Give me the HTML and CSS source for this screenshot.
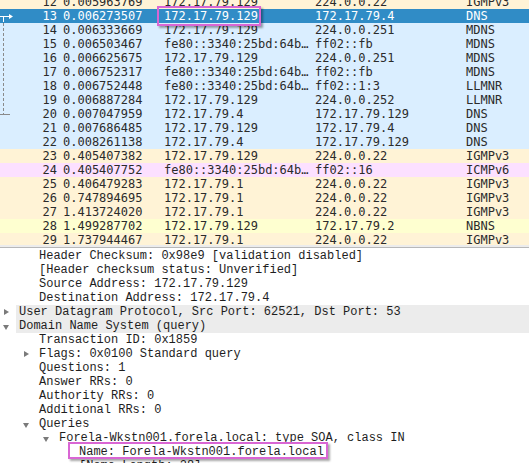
FILE: index.html
```html
<!DOCTYPE html>
<html>
<head>
<meta charset="utf-8">
<link rel="stylesheet" href="styles.css">
</head>
<body>
<div class="app">
  <div class="plist">
    <div class="rows">
      <div class="prow igmp"><span>12</span><span>0.005963769</span><span>172.17.79.129</span><span>224.0.0.22</span><span>IGMPv3</span></div>
      <div class="prow sel"><span>13</span><span>0.006273507</span><span>172.17.79.129</span><span>172.17.79.4</span><span>DNS</span></div>
      <div class="prow udp"><span>14</span><span>0.006333669</span><span>172.17.79.129</span><span>224.0.0.251</span><span>MDNS</span></div>
      <div class="prow udp"><span>15</span><span>0.006503467</span><span>fe80::3340:25bd:64b…</span><span>ff02::fb</span><span>MDNS</span></div>
      <div class="prow udp"><span>16</span><span>0.006625675</span><span>172.17.79.129</span><span>224.0.0.251</span><span>MDNS</span></div>
      <div class="prow udp"><span>17</span><span>0.006752317</span><span>fe80::3340:25bd:64b…</span><span>ff02::fb</span><span>MDNS</span></div>
      <div class="prow udp"><span>18</span><span>0.006752448</span><span>fe80::3340:25bd:64b…</span><span>ff02::1:3</span><span>LLMNR</span></div>
      <div class="prow udp"><span>19</span><span>0.006887284</span><span>172.17.79.129</span><span>224.0.0.252</span><span>LLMNR</span></div>
      <div class="prow udp"><span>20</span><span>0.007047959</span><span>172.17.79.4</span><span>172.17.79.129</span><span>DNS</span></div>
      <div class="prow udp"><span>21</span><span>0.007686485</span><span>172.17.79.129</span><span>172.17.79.4</span><span>DNS</span></div>
      <div class="prow udp"><span>22</span><span>0.008261138</span><span>172.17.79.4</span><span>172.17.79.129</span><span>DNS</span></div>
      <div class="prow igmp"><span>23</span><span>0.405407382</span><span>172.17.79.129</span><span>224.0.0.22</span><span>IGMPv3</span></div>
      <div class="prow icmp"><span>24</span><span>0.405407752</span><span>fe80::3340:25bd:64b…</span><span>ff02::16</span><span>ICMPv6</span></div>
      <div class="prow igmp"><span>25</span><span>0.406479283</span><span>172.17.79.1</span><span>224.0.0.22</span><span>IGMPv3</span></div>
      <div class="prow igmp"><span>26</span><span>0.747894695</span><span>172.17.79.1</span><span>224.0.0.22</span><span>IGMPv3</span></div>
      <div class="prow igmp"><span>27</span><span>1.413724020</span><span>172.17.79.1</span><span>224.0.0.22</span><span>IGMPv3</span></div>
      <div class="prow nbns"><span>28</span><span>1.499287702</span><span>172.17.79.129</span><span>172.17.79.2</span><span>NBNS</span></div>
      <div class="prow igmp"><span>29</span><span>1.737944467</span><span>172.17.79.1</span><span>224.0.0.22</span><span>IGMPv3</span></div>
    </div>
    <svg class="related" width="16" height="130" viewBox="0 0 16 130">
      <line x1="0" y1="16.5" x2="9" y2="16.5" stroke="#ffffff" stroke-width="1"/>
      <polygon points="9,14 13,16.5 9,19" fill="#ffffff"/>
      <line x1="3.5" y1="16.5" x2="3.5" y2="22" stroke="#ffffff" stroke-width="1"/>
      <line x1="3.5" y1="23" x2="3.5" y2="114" stroke="#8a8a8a" stroke-width="1" stroke-dasharray="3 2"/>
      <line x1="0" y1="114.5" x2="10" y2="114.5" stroke="#8a8a8a" stroke-width="1"/>
    </svg>
    <div class="mark mark-src"></div>
  </div>
  <div class="splitter"></div>
  <div class="details">
    <div class="drow l1"><span class="tw"></span><span class="txt">Header Checksum: 0x98e9 [validation disabled]</span></div>
    <div class="drow l1"><span class="tw"></span><span class="txt">[Header checksum status: Unverified]</span></div>
    <div class="drow l1"><span class="tw"></span><span class="txt">Source Address: 172.17.79.129</span></div>
    <div class="drow l1"><span class="tw"></span><span class="txt">Destination Address: 172.17.79.4</span></div>
    <div class="drow l0 hl"><span class="tw closed"></span><span class="txt">User Datagram Protocol, Src Port: 62521, Dst Port: 53</span></div>
    <div class="drow l0 hl"><span class="tw open"></span><span class="txt">Domain Name System (query)</span></div>
    <div class="drow l1"><span class="tw"></span><span class="txt">Transaction ID: 0x1859</span></div>
    <div class="drow l1"><span class="tw closed"></span><span class="txt">Flags: 0x0100 Standard query</span></div>
    <div class="drow l1"><span class="tw"></span><span class="txt">Questions: 1</span></div>
    <div class="drow l1"><span class="tw"></span><span class="txt">Answer RRs: 0</span></div>
    <div class="drow l1"><span class="tw"></span><span class="txt">Authority RRs: 0</span></div>
    <div class="drow l1"><span class="tw"></span><span class="txt">Additional RRs: 0</span></div>
    <div class="drow l1"><span class="tw open"></span><span class="txt">Queries</span></div>
    <div class="drow l2"><span class="tw open"></span><span class="txt">Forela-Wkstn001.forela.local: type SOA, class IN</span></div>
    <div class="drow l3"><span class="tw"></span><span class="txt">Name: Forela-Wkstn001.forela.local</span></div>
    <div class="drow l3"><span class="tw"></span><span class="txt">[Name Length: 28]</span></div>
    <div class="mark mark-name"></div>
  </div>
</div>
</body>
</html>
```

FILE: styles.css
```css
* { box-sizing: border-box; }
html, body {
  margin: 0;
  padding: 0;
  background: #ffffff;
}
.app {
  width: 529px;
  height: 463px;
  overflow: hidden;
  display: flex;
  flex-direction: column;
}
.plist {
  position: relative;
  height: 245px;
  flex: none;
  overflow: hidden;
  font-family: "DejaVu Sans Mono", monospace;
  font-size: 12px;
  color: #2b2b2b;
}
.rows {
  margin-top: -5px;
}
.prow {
  display: grid;
  grid-template-columns: 60px 101px 151px 151px 66px;
  height: 14px;
  line-height: 14px;
  white-space: nowrap;
}
.prow span { overflow: hidden; }
.prow span:nth-child(1) { text-align: right; padding-right: 3px; }
.prow span:nth-child(n+2) { padding-left: 3px; }
.prow.udp { background: #daeeff; }
.prow.igmp { background: #fff3d6; }
.prow.icmp { background: #fce0ff; }
.prow.nbns { background: #feffd0; }
.prow.sel { background: #308cc6; color: #ffffff; }

.related {
  position: absolute;
  left: 0;
  top: 0;
}
.mark {
  position: absolute;
  border: 2px solid #d966d4;
  box-shadow: 2px 2px 2px rgba(0, 0, 0, 0.35);
}
.mark-src {
  left: 157px;
  top: 6px;
  width: 104px;
  height: 20px;
}
.splitter {
  flex: none;
  height: 3px;
  background: #ececec;
  border-bottom: 1px solid #b8b8b8;
}
.details {
  position: relative;
  flex: 1;
  padding-top: 1px;
  font-family: "Liberation Mono", monospace;
  font-size: 12px;
  color: #1e1e1e;
}
.drow {
  display: flex;
  height: 14px;
  line-height: 14px;
  white-space: nowrap;
}
.drow.l1 { padding-left: 20px; }
.drow.l2 { padding-left: 40px; }
.drow.l3 { padding-left: 60px; }
.tw {
  position: relative;
  flex: none;
  width: 19px;
  height: 14px;
}
.tw.closed::before {
  content: "";
  position: absolute;
  left: 4px;
  top: 4px;
  border-top: 3.5px solid transparent;
  border-bottom: 3.5px solid transparent;
  border-left: 5px solid #7a7a7a;
}
.tw.open::before {
  content: "";
  position: absolute;
  left: 3px;
  top: 6px;
  border-left: 3.5px solid transparent;
  border-right: 3.5px solid transparent;
  border-top: 5px solid #7a7a7a;
}
.drow.hl .txt {
  flex: 1;
  background: #ececec;
  margin-left: -3px;
  padding-left: 3px;
}
.mark-name {
  left: 68px;
  top: 194px;
  width: 260px;
  height: 17px;
}
```
